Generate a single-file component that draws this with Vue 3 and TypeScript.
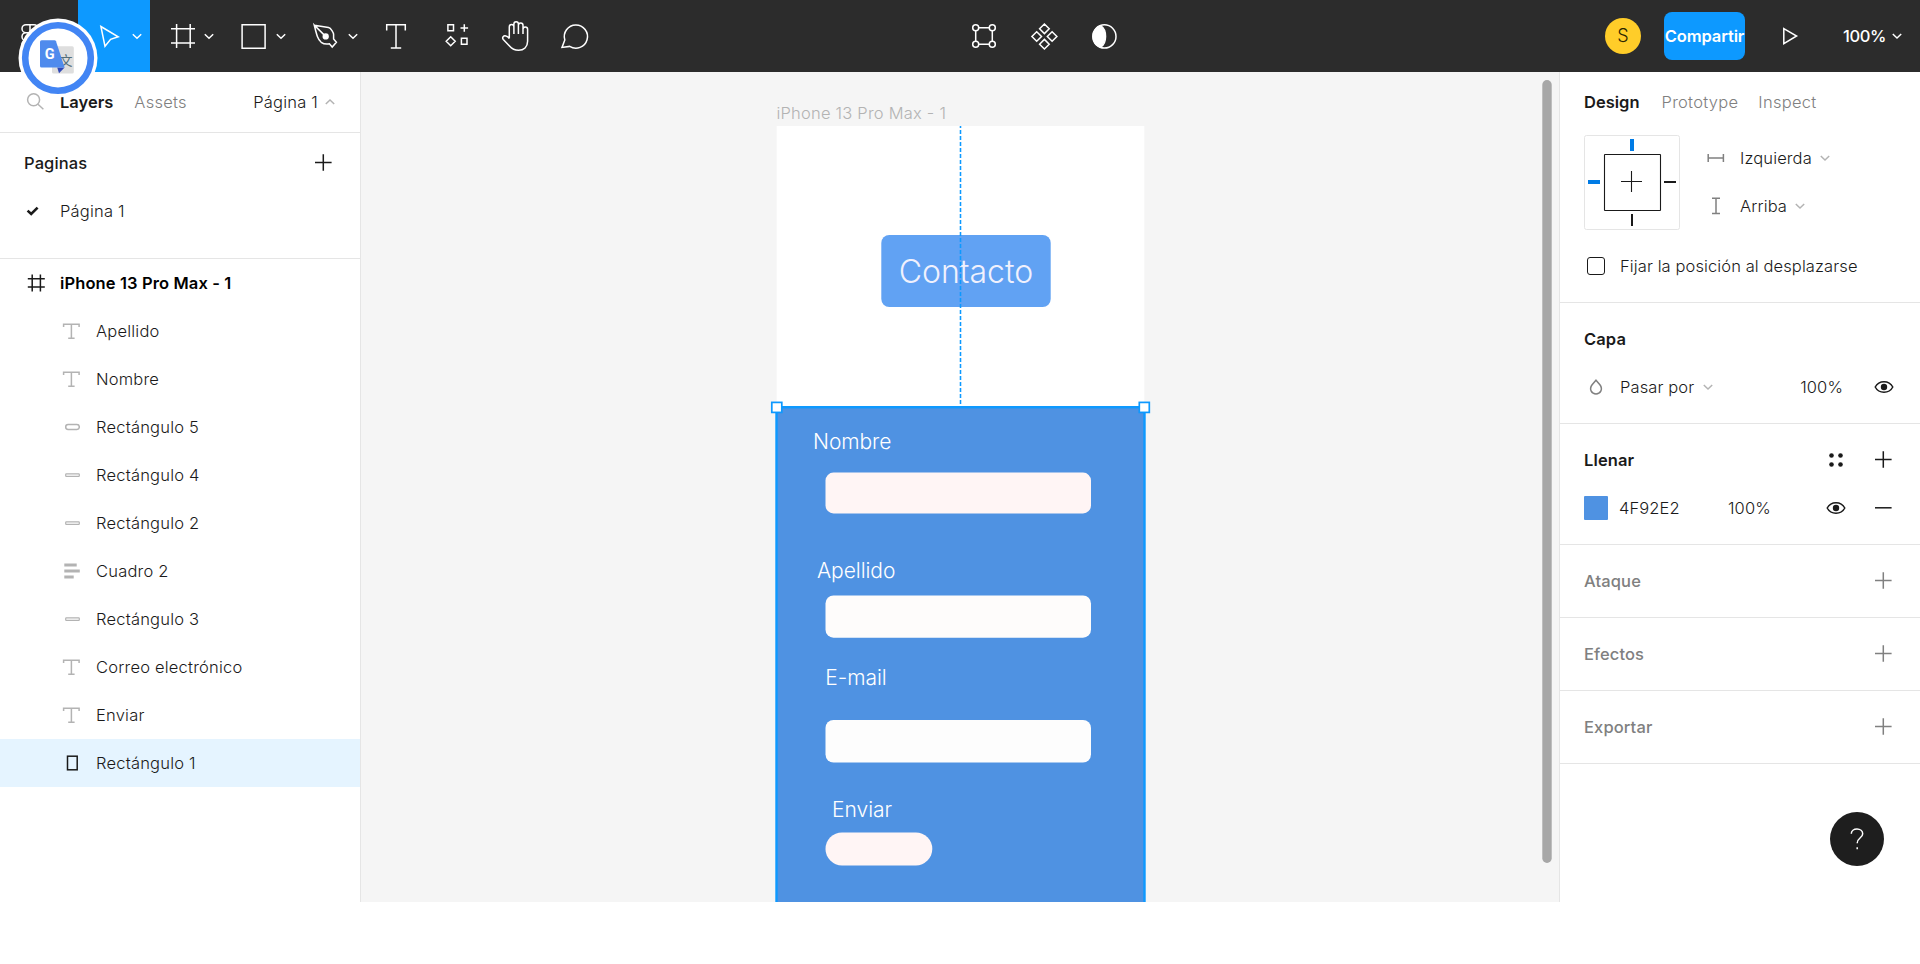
<script setup lang="ts">
type LayerKind = 'text' | 'pill' | 'bar' | 'list' | 'box'

interface Layer {
  name: string
  kind: LayerKind
  selected?: boolean
}

interface Field {
  x: number
  y: number
  width: number
  height: number
  radius: number
  fill: string
}

interface Label {
  text: string
  x: number
  y: number
  width: number
}

const layers: Layer[] = [
  { name: 'Apellido', kind: 'text' },
  { name: 'Nombre', kind: 'text' },
  { name: 'Rectángulo 5', kind: 'pill' },
  { name: 'Rectángulo 4', kind: 'bar' },
  { name: 'Rectángulo 2', kind: 'bar' },
  { name: 'Cuadro 2', kind: 'list' },
  { name: 'Rectángulo 3', kind: 'bar' },
  { name: 'Correo electrónico', kind: 'text' },
  { name: 'Enviar', kind: 'text' },
  { name: 'Rectángulo 1', kind: 'box', selected: true },
]

const fields: Field[] = [
  { x: 825.5, y: 472.6, width: 265.5, height: 40.8, radius: 8, fill: '#fff5f5' },
  { x: 825.5, y: 595.4, width: 265.5, height: 42.3, radius: 8, fill: '#fefcfb' },
  { x: 825.5, y: 720, width: 265.5, height: 42.5, radius: 8, fill: '#fdfdfd' },
  { x: 825.5, y: 832.4, width: 106.8, height: 33, radius: 16.5, fill: '#fff5f5' },
]

const labels: Label[] = [
  { text: 'Nombre', x: 813, y: 448.5, width: 78.5 },
  { text: 'Apellido', x: 817, y: 578, width: 78.5 },
  { text: 'E-mail', x: 825.2, y: 684.5, width: 61.6 },
  { text: 'Enviar', x: 832, y: 816.5, width: 60.2 },
]

const emptySections: string[] = ['Ataque', 'Efectos', 'Exportar']
</script>

<template>
  <div class="app">
    <header class="toolbar">
      <div class="tool menu">
        <svg viewBox="0 0 78 72" width="78" height="72" class="line">
          <path d="M30 24.7H26a4 4 0 0 0 0 8h4zM30 24.7h4a4 4 0 0 1 0 8h-4M26 32.7a4 4 0 0 0 0 8h4v-8M26 40.7a4 4 0 1 0 4 4v-4" />
        </svg>
      </div>
      <div class="tool wide active">
        <svg viewBox="78 0 72 72" width="72" height="72" class="line">
          <path d="M100.9 26.5L118.2 36.8L110.6 39.4L105 46.3Z" />
          <path d="M132.8 34.2l4.2 4l4.2-4" />
        </svg>
      </div>
      <div class="tool wide">
        <svg viewBox="150 0 72 72" width="72" height="72" class="line">
          <path d="M176.6 24v24M190.2 24v24M171 28.8h24M171 42.9h24" />
          <path d="M204.8 34.2l4.2 4l4.2-4" />
        </svg>
      </div>
      <div class="tool wide">
        <svg viewBox="222 0 72 72" width="72" height="72" class="line">
          <path d="M242.1 24.8h23v23.4h-23z" />
          <path d="M276.8 34.2l4.2 4l4.2-4" />
        </svg>
      </div>
      <div class="tool wide">
        <svg viewBox="294 0 72 72" width="72" height="72" class="line">
          <path d="M314.3 25.2L328.5 27.6C331 28.2 333.6 32.6 333.6 34.6V39L336.4 42.3L332.2 47L329.4 43.8C326.6 44.3 323.3 43.8 321.2 42.3C317.7 39.3 316.7 35 314.3 25.2L324.6 35.4" />
          <circle cx="325.7" cy="36.4" r="2.4" class="solid" />
          <path d="M348.8 34.2l4.2 4l4.2-4" />
        </svg>
      </div>
      <div class="tool">
        <svg viewBox="366 0 60 72" width="60" height="72" class="line">
          <path d="M386.7 30.5v-5.7h18.6v5.7M396 24.8v23M390.8 47.9h10.4" />
        </svg>
      </div>
      <div class="tool">
        <svg viewBox="426 0 60 72" width="60" height="72" class="line">
          <path d="M447.9 24.8h5.6v6h-5.6zM461.4 38.2h5.6v6h-5.6zM464.3 24.2v7.6M460.5 28h7.6M450.7 36.8l4.5 4.5l-4.5 4.5l-4.5-4.5z" />
        </svg>
      </div>
      <div class="tool">
        <svg viewBox="486 0 60 72" width="60" height="72" class="line">
          <path d="M509.3 38.5V26.7a2.3 2.3 0 0 1 4.6 0V34V24a2.25 2.25 0 0 1 4.5 0V34V25.2a2.3 2.3 0 0 1 4.6 0V34V29.3a2.3 2.3 0 0 1 4.6 0V41.3C527.6 47 523.8 50.3 518.6 50.3C514.5 50.3 512 49 509.5 46L503.3 39.4C501.7 37.5 503.6 35.2 506 36Q508 36.6 509.3 38.5" />
        </svg>
      </div>
      <div class="tool">
        <svg viewBox="546 0 60 72" width="60" height="72" class="line">
          <path d="M569.7 46.4A11.6 11.6 0 1 0 564.8 40L562 47.4Z" />
        </svg>
      </div>

      <div class="center-tools">
        <svg viewBox="954 0 60 72" width="60" height="72" class="line">
          <path d="M979 27.7h10M979 44.3h10M975.7 31v10M992.3 31v10" />
          <circle cx="975.7" cy="27.7" r="3" />
          <circle cx="992.3" cy="27.7" r="3" />
          <circle cx="975.7" cy="44.3" r="3" />
          <circle cx="992.3" cy="44.3" r="3" />
        </svg>
        <svg viewBox="1014 0 60 72" width="60" height="72" class="line">
          <path d="M1044.4 24l4.8 4.8l-4.8 4.8l-4.8-4.8zM1036.7 31.7l4.8 4.8l-4.8 4.8l-4.8-4.8zM1052.1 31.7l4.8 4.8l-4.8 4.8l-4.8-4.8zM1044.4 39.4l4.8 4.8l-4.8 4.8l-4.8-4.8z" />
        </svg>
        <svg viewBox="1074 0 60 72" width="60" height="72" class="line">
          <circle cx="1104.4" cy="36.4" r="11.6" />
          <path d="M1100.6 25.6A11.6 11.6 0 0 0 1100.6 47.2C1107.2 43 1107.2 29.8 1100.6 25.6Z" class="solid" />
        </svg>
      </div>

      <div class="account">
        <div class="avatar">S</div>
        <button class="share">Compartir</button>
        <svg viewBox="1745 0 98 72" width="98" height="72" class="line">
          <path d="M1783.8 28.6L1796.6 36L1783.8 43.6Z" />
        </svg>
        <span class="zoom">100%</span>
        <svg viewBox="0 0 12 8" width="12" height="8" class="line zoom-caret">
          <path d="M1.8 2l4.2 4l4.2-4" />
        </svg>
      </div>
    </header>

    <div class="translate-badge">
      <svg viewBox="18 18 80 80" width="80" height="80">
        <circle cx="58" cy="58" r="39.5" fill="#fff" />
        <circle cx="58" cy="58" r="32.8" fill="#fff" stroke="#4285f4" stroke-width="6.6" />
        <rect x="52" y="46.3" width="21.8" height="27.3" rx="1.6" fill="#dedede" />
        <text x="59.4" y="65.2" class="badge-cjk">文</text>
        <path d="M57.2 67.4H64.6L59 73.2Z" fill="#3048b8" />
        <path d="M41.6 40.2H54.6Q55.6 40.2 56 41.2L64.6 67.6H41.6Q40 67.6 40 66V41.8Q40 40.2 41.6 40.2Z" fill="#4f8bed" />
        <text x="44.8" y="59.2" class="badge-g">G</text>
      </svg>
    </div>

    <main class="workspace">
      <aside class="left">
        <div class="left-tabs">
          <svg viewBox="24 90 24 24" width="24" height="24" class="line pale search">
            <circle cx="33.6" cy="99.8" r="6" />
            <path d="M38 104.2l5.4 5" />
          </svg>
          <span class="tab on">Layers</span>
          <span class="tab assets">Assets</span>
          <span class="page-picker">Página 1</span>
          <svg viewBox="0 0 12 8" width="12" height="8" class="line pale page-caret">
            <path d="M1.8 6l4.2-4l4.2 4" />
          </svg>
        </div>
        <section class="pages">
          <div class="pages-head">
            <span>Paginas</span>
            <svg viewBox="0 0 18 18" width="18" height="18" class="line dark">
              <path d="M9.3 .2v16.6M1 8.4h16.6" />
            </svg>
          </div>
          <div class="page-row">
            <svg viewBox="0 0 14 10" width="14" height="10" class="line dark check">
              <path d="M1.6 4.6l3.6 3.4l6.4-6.4" />
            </svg>
            <span>Página 1</span>
          </div>
        </section>
        <div class="layer frame">
          <svg viewBox="27 274 18 18" width="18" height="18" class="line dark">
            <path d="M32.2 274.5v17M40.4 274.5v17M27.8 278.8h17M27.8 287h17" />
          </svg>
          <span>iPhone 13 Pro Max - 1</span>
        </div>
        <div v-for="layer in layers" :key="layer.name" class="layer child" :class="{ selected: layer.selected }">
          <svg viewBox="0 0 18 18" width="18" height="18" class="line glyph">
            <path v-if="layer.kind === 'text'" d="M1.6 5V2.2h15.5V5M9.4 2.2v14M6.2 16.2h6.4" />
            <rect v-else-if="layer.kind === 'pill'" x="3.7" y="6.6" width="13.6" height="4.8" rx="2.4" />
            <rect v-else-if="layer.kind === 'bar'" x="3.7" y="7.8" width="13.6" height="2.6" rx=".6" stroke-width="1.2" />
            <path v-else-if="layer.kind === 'list'" d="M2.3 3h12.4M2.3 9h15.5M2.3 15h9.4" stroke-width="2.8" />
            <rect v-else x="5.5" y="2.2" width="9.7" height="13.6" class="strong" />
          </svg>
          <span>{{ layer.name }}</span>
        </div>
      </aside>

      <div class="canvas">
        <svg viewBox="361 72 1198 830" width="1198" height="830">
          <text x="776.4" y="119" textLength="169.6" class="frame-title">iPhone 13 Pro Max - 1</text>
          <rect x="776.7" y="126" width="367.6" height="282" fill="#fff" />
          <rect x="881.3" y="235" width="169.4" height="72" rx="8" fill="#61a2f3" />
          <text x="898.8" y="282.6" textLength="134.5" class="headline">Contacto</text>
          <path d="M960.5 126V404" stroke="#0d99ff" stroke-opacity=".2" stroke-width="3" stroke-dasharray="4 2" stroke-dashoffset="2" />
          <path d="M960.5 126V404" stroke="#0d99ff" stroke-width="1.2" stroke-dasharray="4 2" stroke-dashoffset="2" />
          <rect x="776.5" y="407.2" width="368" height="520" fill="#4f92e2" stroke="#0d99ff" stroke-width="2.4" />
          <rect
            v-for="(field, i) in fields"
            :key="i"
            :x="field.x"
            :y="field.y"
            :width="field.width"
            :height="field.height"
            :rx="field.radius"
            :fill="field.fill"
          />
          <text
            v-for="label in labels"
            :key="label.text"
            :x="label.x"
            :y="label.y"
            :textLength="label.width"
            class="form-label"
          >{{ label.text }}</text>
          <rect x="771.8" y="402.4" width="10" height="10" class="handle" />
          <rect x="1139.3" y="402.4" width="10" height="10" class="handle" />
          <rect x="1542.3" y="80" width="9.4" height="783" rx="4.7" fill="#a7a7a7" />
        </svg>
      </div>

      <aside class="right">
        <div class="right-tabs">
          <span class="on">Design</span>
          <span>Prototype</span>
          <span class="inspect">Inspect</span>
        </div>
        <section class="constraints">
          <div class="constraint-grid">
            <svg viewBox="1584 135 96 95" width="96" height="95">
              <rect x="1584.5" y="135.5" width="95" height="94" rx="2" fill="#fff" stroke="#e5e5e5" />
              <rect x="1604.5" y="154.5" width="56" height="56" rx=".5" fill="none" stroke="#1a1a1a" stroke-width="1.1" />
              <path d="M1631.5 171v21M1621 181.5h21" stroke="#1a1a1a" stroke-width="1.1" />
              <path d="M1632 139v12M1588 182h12" stroke="#007be5" stroke-width="4" />
              <path d="M1632 214v12M1664 182h12" stroke="#1a1a1a" stroke-width="2" />
            </svg>
            <div class="axes">
              <div class="axis">
                <svg viewBox="0 0 18 18" width="18" height="18" class="line gray">
                  <path d="M1.2 5v8M16.4 5v8M1.2 9h15.2" />
                </svg>
                <span class="value">Izquierda</span>
                <svg viewBox="0 0 12 8" width="12" height="8" class="line pale"><path d="M1.8 2l4.2 4l4.2-4" /></svg>
              </div>
              <div class="axis">
                <svg viewBox="0 0 18 18" width="18" height="18" class="line gray">
                  <path d="M5 1.2h8M5 16.6h8M9 1.2v15.4" />
                </svg>
                <span class="value">Arriba</span>
                <svg viewBox="0 0 12 8" width="12" height="8" class="line pale"><path d="M1.8 2l4.2 4l4.2-4" /></svg>
              </div>
            </div>
          </div>
          <div class="fix-row">
            <span class="checkbox"></span>
            <span>Fijar la posición al desplazarse</span>
          </div>
        </section>

        <section class="block">
          <div class="row title"><span>Capa</span></div>
          <div class="row">
            <svg viewBox="0 0 24 24" width="24" height="24" class="line gray">
              <path d="M12 5.2L15.9 9.8C19.4 14.6 16.1 18.9 12 18.9S4.6 14.6 8.1 9.8Z" />
            </svg>
            <span class="blend">Pasar por</span>
            <svg viewBox="0 0 12 8" width="12" height="8" class="line pale"><path d="M1.8 2l4.2 4l4.2-4" /></svg>
            <span class="layer-opacity">100%</span>
            <svg viewBox="0 0 20 14" width="20" height="14" class="line dark end-eye">
              <path d="M1.2 7C5 -.1 15 -.1 18.8 7C15 14.1 5 14.1 1.2 7Z" />
              <circle cx="10" cy="7" r="3.2" class="solid" />
            </svg>
          </div>
        </section>

        <section class="block">
          <div class="row title">
            <span>Llenar</span>
            <svg viewBox="0 0 16 16" width="16" height="16" class="styles">
              <circle cx="3.5" cy="3.5" r="2.3" />
              <circle cx="12.5" cy="3.5" r="2.3" />
              <circle cx="3.5" cy="12.5" r="2.3" />
              <circle cx="12.5" cy="12.5" r="2.3" />
            </svg>
            <svg viewBox="0 0 18 18" width="18" height="18" class="line dark plus"><path d="M9.3 .2v16.6M1 8.4h16.6" /></svg>
          </div>
          <div class="row">
            <span class="swatch"></span>
            <span class="hex">4F92E2</span>
            <span class="fill-opacity">100%</span>
            <svg viewBox="0 0 20 14" width="20" height="14" class="line dark fill-eye">
              <path d="M1.2 7C5 -.1 15 -.1 18.8 7C15 14.1 5 14.1 1.2 7Z" />
              <circle cx="10" cy="7" r="3.2" class="solid" />
            </svg>
            <svg viewBox="0 0 18 18" width="18" height="18" class="line dark minus"><path d="M1 8.8h16.6" /></svg>
          </div>
        </section>

        <section v-for="name in emptySections" :key="name" class="block empty">
          <div class="row title">
            <span>{{ name }}</span>
            <svg viewBox="0 0 18 18" width="18" height="18" class="line gray plus"><path d="M9.3 .2v16.6M1 8.4h16.6" /></svg>
          </div>
        </section>

        <button class="help" aria-label="help">
          <svg viewBox="0 0 14 22" width="14" height="22" class="line">
            <path d="M1.3 5.8C1.3 2.8 3.9 1 7 1S12.7 3 12.7 5.8C12.7 10 7.2 9.6 7.2 15.2M7.2 19.2v2" />
          </svg>
        </button>
      </aside>
    </main>
  </div>
</template>

<style>
body {
  background: #fff;
  overflow: hidden;
}
</style>

<style scoped>
.app {
  width: 1920px;
  height: 902px;
  position: relative;
  font-family: Inter, 'Liberation Sans', sans-serif;
  font-size: 16.5px;
  font-weight: 350;
  letter-spacing: 0.12px;
  line-height: 24px;
  color: #1a1a1a;
  overflow: hidden;
}

svg {
  display: block;
  flex: none;
}

span {
  white-space: nowrap;
}

.line {
  fill: none;
  stroke: #fff;
  stroke-width: 1.5;
}

.line .solid {
  fill: #fff;
}

.dark {
  stroke: #1a1a1a;
}

.dark .solid {
  fill: #1a1a1a;
  stroke: none;
}

.gray {
  stroke: #808080;
}

.pale {
  stroke: #b3b3b3;
}

.toolbar {
  display: flex;
  height: 72px;
  background: #2c2c2c;
  color: #fff;
}

.tool {
  width: 60px;
}

.menu {
  width: 78px;
}

.wide {
  width: 72px;
}

.active {
  background: #0d99ff;
}

.center-tools {
  display: flex;
  margin-left: 348px;
}

.account {
  display: flex;
  align-items: center;
  margin-left: 471px;
}

.avatar {
  width: 36px;
  height: 36px;
  border-radius: 50%;
  background: #ffcd29;
  color: #2c2500;
  font-size: 18px;
  line-height: 35px;
  text-align: center;
  margin-right: 23px;
}

.share {
  width: 81px;
  height: 48px;
  padding: 0;
  border: 0;
  border-radius: 8px;
  background: #0d99ff;
  color: #fff;
  font: inherit;
  font-weight: 600;
  letter-spacing: -0.1px;
  text-align: center;
  white-space: nowrap;
}

.zoom {
  width: 48px;
  font-weight: 500;
  letter-spacing: -0.4px;
}

.translate-badge {
  position: absolute;
  left: 18px;
  top: 18px;
  z-index: 2;
}

.badge-g {
  font: 700 14.5px Roboto, sans-serif;
  fill: #fff;
}

.badge-cjk {
  font: 400 13px 'Noto Sans CJK SC', sans-serif;
  fill: #546e7a;
}

.workspace {
  display: flex;
  height: 830px;
}

.left {
  box-sizing: border-box;
  width: 361px;
  height: 830px;
  border-right: 1px solid #e5e5e5;
  background: #fff;
}

.left-tabs {
  display: flex;
  align-items: center;
  height: 60px;
  border-bottom: 1px solid #e5e5e5;
}

.search {
  margin-left: 24px;
}

.tab {
  margin-left: 12px;
  color: #808080;
  letter-spacing: 0.25px;
}

.tab.on,
.right-tabs .on {
  color: #1a1a1a;
  font-weight: 600;
  letter-spacing: 0;
}

.tab.assets {
  margin-left: 21px;
}

.page-picker {
  margin-left: auto;
  letter-spacing: 0.2px;
}

.page-caret {
  margin: 0 24px 0 6px;
}

.pages {
  height: 125px;
  border-bottom: 1px solid #e5e5e5;
}

.pages-head {
  display: flex;
  justify-content: space-between;
  align-items: center;
  height: 54px;
  padding: 5px 28px 0 24px;
  box-sizing: border-box;
  font-weight: 500;
}

.page-row {
  display: flex;
  align-items: center;
  height: 48px;
  letter-spacing: 0.2px;
}

.check {
  margin: 0 20px 0 26px;
  stroke-width: 2.6;
}

.layer {
  display: flex;
  align-items: center;
  height: 48px;
}

.frame {
  padding-left: 27px;
  gap: 15px;
  font-weight: 600;
  color: #000;
}

.child {
  padding-left: 62px;
  gap: 16px;
  letter-spacing: 0.21px;
}

.glyph {
  stroke: #b3b3b3;
}

.glyph .strong {
  stroke: #1a1a1a;
}

.selected {
  background: #e5f4ff;
}

.canvas {
  width: 1198px;
  height: 830px;
  background: #f5f5f5;
}

.frame-title {
  fill: #b3b3b3;
}

.headline {
  font-size: 32px;
  font-weight: 360;
  fill: #f0f1fd;
}

.form-label {
  font-size: 21px;
  fill: #fff;
}

.handle {
  fill: #fff;
  stroke: #0d99ff;
  stroke-width: 1.7;
}

.right {
  position: relative;
  box-sizing: border-box;
  width: 361px;
  height: 830px;
  border-left: 1px solid #e5e5e5;
  background: #fff;
}

.right-tabs {
  display: flex;
  align-items: center;
  gap: 22px;
  height: 60px;
  padding-left: 24px;
  color: #808080;
  letter-spacing: 0.28px;
}

.inspect {
  margin-left: -2px;
}

.constraints {
  box-sizing: border-box;
  height: 171px;
  padding: 3px 24px 0;
  border-bottom: 1px solid #e5e5e5;
}

.constraint-grid {
  display: flex;
  gap: 27px;
}

.axes {
  margin-top: -1px;
}

.axis {
  display: flex;
  align-items: center;
  height: 48px;
}

.value {
  margin: 0 7px 0 15px;
}

.fix-row {
  display: flex;
  align-items: center;
  height: 48px;
  margin-top: 12px;
  letter-spacing: 0.1px;
}

.checkbox {
  box-sizing: border-box;
  width: 18px;
  height: 18px;
  margin: 0 15px 0 3px;
  border: 1.5px solid #1a1a1a;
  border-radius: 3px;
}

.block {
  padding: 12px 24px;
  border-bottom: 1px solid #e5e5e5;
}

.row {
  display: flex;
  align-items: center;
  height: 48px;
}

.title {
  font-weight: 600;
  color: #1a1a1a;
}

.empty .title {
  font-weight: 500;
  color: #808080;
}

.blend {
  margin: 0 8px 0 12px;
}

.layer-opacity {
  margin-left: auto;
}

.end-eye {
  margin: 0 2px 0 31px;
}

.styles {
  margin-left: auto;
  fill: #1a1a1a;
}

.plus {
  margin-left: auto;
  margin-right: 4px;
}

.styles + .plus {
  margin-left: 30px;
}

.swatch {
  width: 24px;
  height: 24px;
  border-radius: 1px;
  background: #4f92e2;
}

.hex {
  width: 109px;
  margin-left: 11px;
}

.fill-eye {
  margin-left: auto;
}

.minus {
  margin: 0 4px 0 28px;
}

.help {
  position: absolute;
  right: 36px;
  bottom: 36px;
  display: flex;
  justify-content: center;
  align-items: center;
  width: 54px;
  height: 54px;
  padding: 0;
  border: 0;
  border-radius: 50%;
  background: #1e1e1e;
}
</style>
